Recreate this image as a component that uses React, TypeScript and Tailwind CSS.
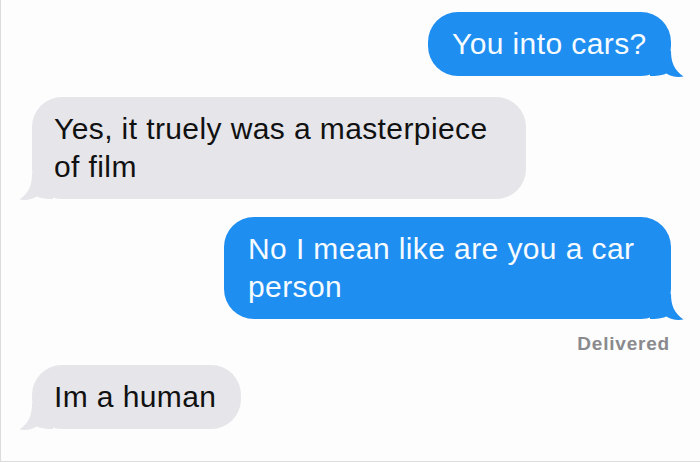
import React from 'react';

const font = { fontFamily: '"Liberation Sans", Arial, sans-serif' };

const SentTail = () => (
  <svg
    className="absolute -right-[13px] -bottom-px"
    width="34"
    height="26"
    viewBox="0 0 34 26"
  >
    <path d="M0 0 L21 0 C21 11 24 19 33.5 25.5 C27 26.5 20.5 25.5 16.5 22.5 C12 24.5 6 25 0 25 Z" fill="#1f8ef1" />
  </svg>
);

const ReceivedTail = () => (
  <svg
    className="absolute -left-[13px] -bottom-px"
    width="34"
    height="26"
    viewBox="0 0 34 26"
  >
    <path d="M34 0 L13 0 C13 11 10 19 0.5 25.5 C7 26.5 13.5 25.5 17.5 22.5 C22 24.5 28 25 34 25 Z" fill="#e5e5ea" />
  </svg>
);

const Sent: React.FC<{ className: string; children: React.ReactNode }> = ({ className, children }) => (
  <div
    className={`relative self-end mr-[29px] rounded-[30px] bg-[#1f8ef1] pl-6 pr-6 py-[13px] text-[30px] leading-[38px] tracking-[0.4px] text-[#f6fbff] ${className}`}
  >
    <span className="relative z-10">{children}</span>
    <SentTail />
  </div>
);

const Received: React.FC<{ className: string; children: React.ReactNode }> = ({ className, children }) => (
  <div
    className={`relative self-start ml-[31px] rounded-[30px] bg-[#e5e5ea] pl-[22px] pr-6 py-[13px] text-[30px] leading-[38px] tracking-[0.4px] text-[#111111] ${className}`}
  >
    <span className="relative z-10">{children}</span>
    <ReceivedTail />
  </div>
);

export default function App() {
  return (
    <div
      className="w-[700px] h-[462px] overflow-hidden bg-[#fdfdfd] border-l border-b border-[#dcdcdc] flex flex-col pt-3"
      style={font}
    >
      <Sent className="w-[243px]">You into cars?</Sent>

      <Received className="mt-[21px] w-[494px]">Yes, it truely was a masterpiece of film</Received>

      <Sent className="mt-[18px] w-[447px]">No I mean like are you a car person</Sent>

      <div className="self-end mr-[30px] mt-[14px] text-[19px] leading-[22px] font-bold tracking-[0.8px] text-[#8a8a8e]">
        Delivered
      </div>

      <Received className="mt-[10px] w-[209px]">Im a human</Received>
    </div>
  );
}
